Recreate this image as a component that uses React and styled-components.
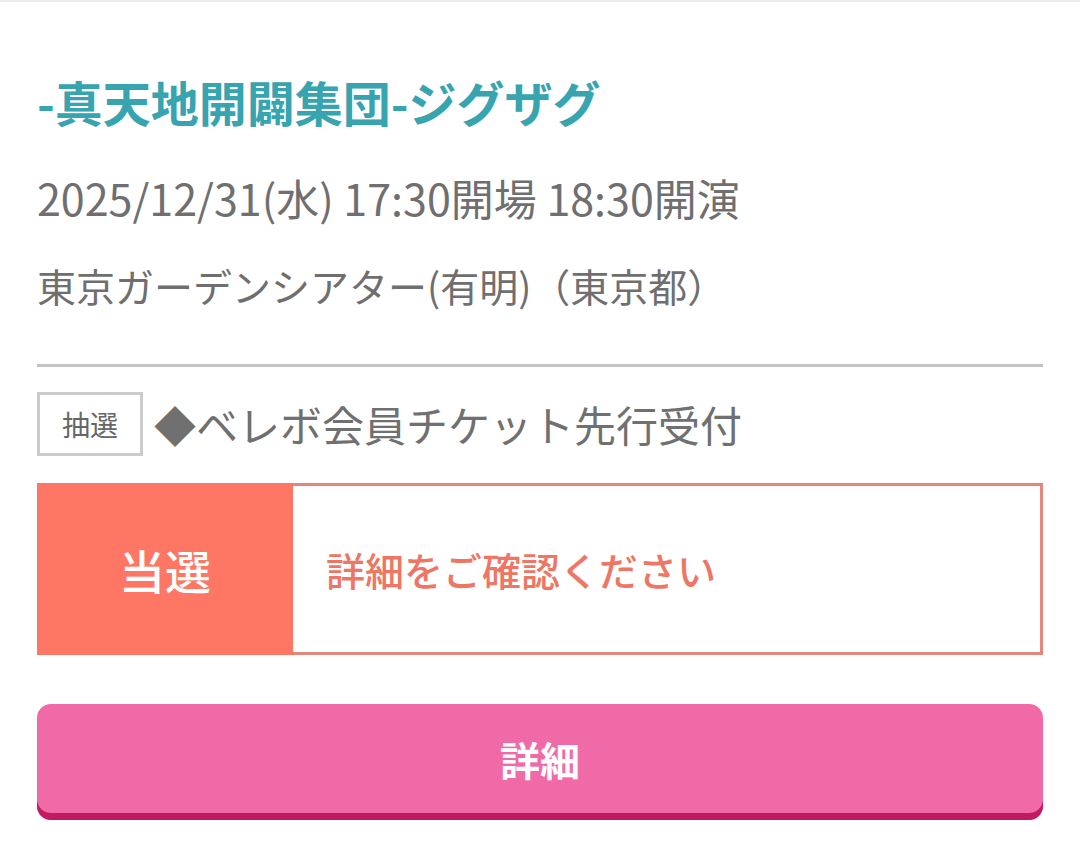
import React from 'react';
import styled, { createGlobalStyle } from 'styled-components';

const GlobalStyle = createGlobalStyle`
  html, body {
    margin: 0;
    padding: 0;
    background: #fff;
  }
  body {
    font-family: "Noto Sans CJK JP", "Noto Sans", sans-serif;
  }
`;

const Page = styled.div`
  width: 1080px;
  min-height: 853px;
  box-sizing: border-box;
  border-top: 2px solid #ececec;
  padding: 67px 37px 0;
  display: flex;
  flex-direction: column;
`;

const Title = styled.h1`
  margin: 0;
  font-size: 48px;
  line-height: 64px;
  font-weight: 700;
  color: #37a4af;
`;

const InfoLine = styled.p`
  margin: ${(p) => p.$top}px 0 0;
  font-size: ${(p) => p.$size}px;
  line-height: 54px;
  font-weight: 400;
  color: #6f6f6f;
`;

const Divider = styled.hr`
  margin: 52px 0 0;
  border: none;
  height: 3px;
  background: #c4c4c4;
`;

const LotteryRow = styled.div`
  display: flex;
  align-items: center;
  gap: 11px;
  margin-top: 25px;
`;

const Tag = styled.span`
  width: 106px;
  height: 64px;
  box-sizing: border-box;
  border: 3px solid #cbcbcb;
  display: flex;
  align-items: center;
  justify-content: center;
  font-size: 28px;
  color: #666;
`;

const LotteryName = styled.span`
  font-size: 42px;
  color: #707070;
  line-height: 1;
`;

const Status = styled.div`
  margin-top: 27px;
  height: 172px;
  display: flex;
  box-sizing: border-box;
  border: 3px solid #e3887a;
`;

const StatusBadge = styled.div`
  width: 256px;
  margin: -3px 0 -3px -3px;
  background: #fe7764;
  color: #fff;
  display: flex;
  align-items: center;
  justify-content: center;
  font-size: 46px;
  font-weight: 500;
`;

const StatusText = styled.div`
  flex: 1;
  display: flex;
  align-items: center;
  padding-left: 33px;
  font-size: 39px;
  color: #ed7664;
  font-weight: 500;
`;

const DetailButton = styled.button`
  margin-top: 49px;
  height: 116px;
  border: none;
  border-radius: 14px;
  background: #f06aa8;
  box-shadow: inset 0 -7px 0 #c21a62;
  color: #fff;
  font-family: inherit;
  font-size: 40px;
  font-weight: 700;
  padding: 0 0 6px;
  cursor: pointer;
`;

export default function App() {
  return (
    <>
      <GlobalStyle />
      <Page>
        <Title>-真天地開闢集団-ジグザグ</Title>
        <InfoLine $top={37} $size={43}>
          2025/12/31(水) 17:30開場 18:30開演
        </InfoLine>
        <InfoLine $top={34} $size={39}>
          東京ガーデンシアター(有明)（東京都）
        </InfoLine>
        <Divider />
        <LotteryRow>
          <Tag>抽選</Tag>
          <LotteryName>◆ベレボ会員チケット先行受付</LotteryName>
        </LotteryRow>
        <Status>
          <StatusBadge>当選</StatusBadge>
          <StatusText>詳細をご確認ください</StatusText>
        </Status>
        <DetailButton>詳細</DetailButton>
      </Page>
    </>
  );
}
